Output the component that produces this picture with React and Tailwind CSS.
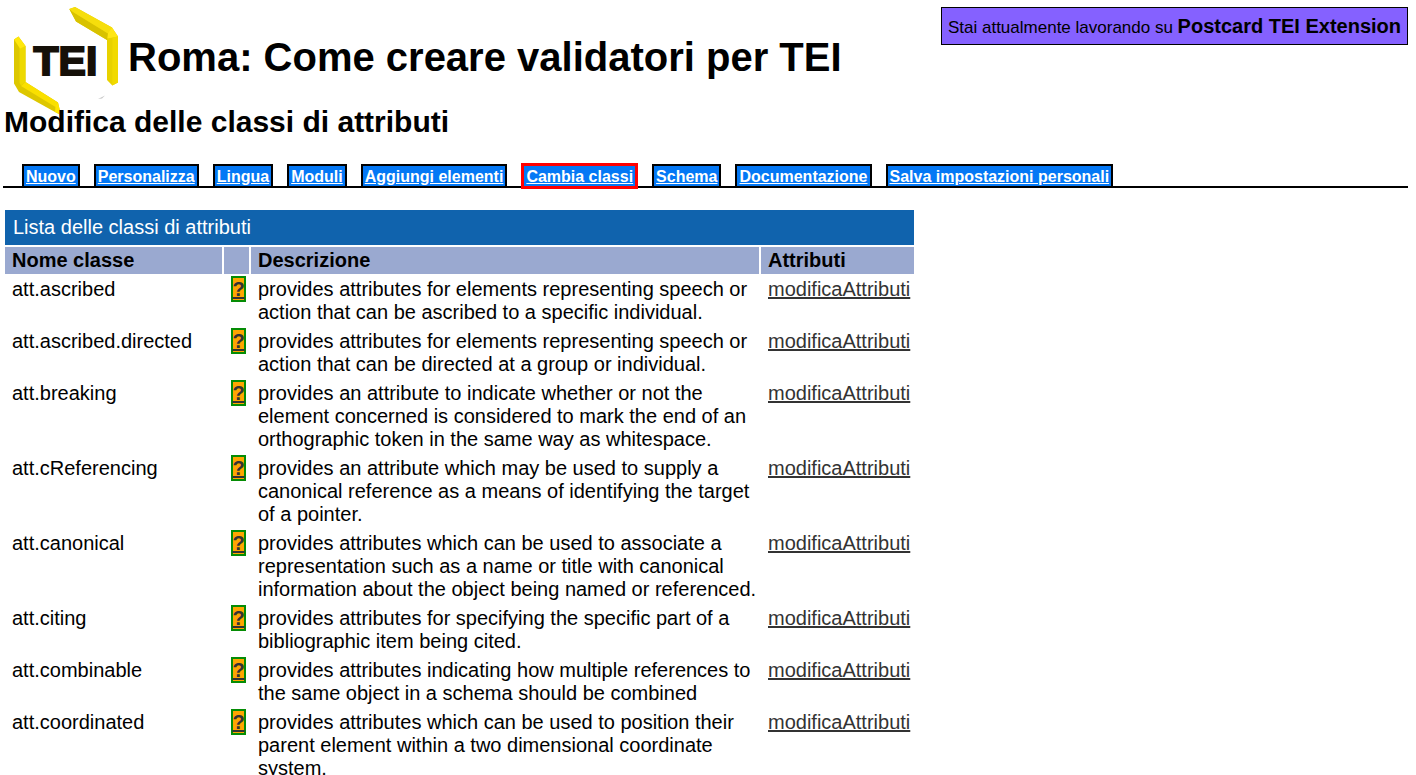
const tabs = [
  "Nuovo",
  "Personalizza",
  "Lingua",
  "Moduli",
  "Aggiungi elementi",
  "Cambia classi",
  "Schema",
  "Documentazione",
  "Salva impostazioni personali",
];

const classes = [
  ["att.ascribed", "provides attributes for elements representing speech or action that can be ascribed to a specific individual."],
  ["att.ascribed.directed", "provides attributes for elements representing speech or action that can be directed at a group or individual."],
  ["att.breaking", "provides an attribute to indicate whether or not the element concerned is considered to mark the end of an orthographic token in the same way as whitespace."],
  ["att.cReferencing", "provides an attribute which may be used to supply a canonical reference as a means of identifying the target of a pointer."],
  ["att.canonical", "provides attributes which can be used to associate a representation such as a name or title with canonical information about the object being named or referenced."],
  ["att.citing", "provides attributes for specifying the specific part of a bibliographic item being cited."],
  ["att.combinable", "provides attributes indicating how multiple references to the same object in a schema should be combined"],
  ["att.coordinated", "provides attributes which can be used to position their parent element within a two dimensional coordinate system."],
];

function Logo() {
  return (
    <svg viewBox="0 0 120 116" className="-mb-4 h-[116px] w-[120px] shrink-0" role="img" aria-label="TEI">
      <path d="M14 39.5 18.5 36.5 25.5 46V82L58 102.5 61 115 55 112 19 92 14 83.5Z" fill="#ddc700" />
      <path d="M19.5 46 25.5 46V82L21 85.5 19.5 83Z" fill="#edd900" />
      <path d="M14 39.5 18.5 36.5 25.5 46 20 48.5Z" fill="#ffe80c" />
      <path d="M25.5 82 58 102.5 55.5 107 21 86Z" fill="#fae000" />
      <path d="M58 102.5 61 115 55 112 55.5 106Z" fill="#ffe500" />
      <path d="M69.3 9 75 7 112 27.5 118 36.5V82.5L112.3 85.5 107 80V40L76 21.5Z" fill="#e8d200" />
      <path d="M69.3 9 73 12 109 34 107 40 76 21.5Z" fill="#d8c200" />
      <path d="M69.3 9 75 7 112 27.5 108 33.5 73 12Z" fill="#f6de0c" />
      <path d="M112 27.5 118 36.5 107.3 38.5 108 33Z" fill="#ffe614" />
      <path d="M112.5 37.5 118 36.5V82.5L112.3 85.5Z" fill="#f1da00" />
      <path d="M98 99 105 95.5 102 98.5Z" fill="#c8c8c8" />
      <text x="33.5" y="75" fontSize="41" fontWeight="700" fontFamily="Liberation Sans, Arial, sans-serif" fill="#151008" stroke="#151008" strokeWidth="2">
        TEI
      </text>
    </svg>
  );
}

export default function App() {
  return (
    <div className="bg-white px-[3px] font-['Liberation_Sans',Arial,sans-serif] text-[20px] leading-[23px] text-black">
      <header className="flex items-start">
        <div className="-ml-[3px] flex flex-1 items-start">
          <Logo />
          <h1 className="mt-[34px] pl-2 text-[40px] leading-[46px] font-bold">Roma: Come creare validatori per TEI</h1>
        </div>
        <p className="mt-[7px] mr-[5px] border border-black bg-[#8561ff] px-1.5 pt-[7px] pb-[5px] text-[17px] leading-[23px]">
          Stai attualmente lavorando su <strong className="text-[20px]">Postcard TEI Extension</strong>
        </p>
      </header>
      <h2 className="mt-1 pl-px text-[30px] leading-[35px] font-bold">Modifica delle classi di attributi</h2>

      <nav className="mt-[25px] mr-[5px] flex h-6 items-start gap-3.5 border-b-2 border-black pl-[19px] text-[16px] leading-[19px] font-bold text-white">
        {tabs.map((tab) => (
          <a
            key={tab}
            href="#"
            aria-current={tab === "Cambia classi" ? "page" : undefined}
            className={
              tab === "Cambia classi"
                ? "-mt-px border-3 border-[#ff0000] bg-[#0478f5] px-0.5 pt-px underline"
                : "border-2 border-black bg-[#0478f5] px-0.5 pt-px underline"
            }
          >
            {tab}
          </a>
        ))}
      </nav>

      <main className="mt-5">
        <table className="w-[913px] max-w-full table-fixed border-separate border-spacing-0.5 text-left">
          <colgroup>
            <col className="w-[217px]" />
            <col className="w-[25px]" />
            <col className="w-[508px]" />
            <col />
          </colgroup>
          <thead>
            <tr>
              <th colSpan={4} className="bg-[#1063ad] px-2 py-1.5 font-normal text-white">Lista delle classi di attributi</th>
            </tr>
            <tr className="bg-[#9aa9d0]">
              <th className="py-0.5 pr-0.5 pl-[7px]">Nome classe</th>
              <td />
              <th className="py-0.5 pr-0.5 pl-[7px]">Descrizione</th>
              <th className="py-0.5 pr-0.5 pl-[7px]">Attributi</th>
            </tr>
          </thead>
          <tbody>
            {classes.map(([name, description]) => (
              <tr key={name} className="align-top">
                <td className="py-0.5 pr-0.5 pl-[7px]">{name}</td>
                <td className="pl-[7px]">
                  <a href="#" aria-label={"Aiuto: " + name} className="flex w-[15px] justify-center border-2 border-[#058c05] bg-[#ffa500] pt-px leading-[21px] font-bold text-[#333333] underline">
                    ?
                  </a>
                </td>
                <td className="py-0.5 pr-0.5 pl-[7px]">{description}</td>
                <td className="py-0.5 pr-0.5 pl-[7px]">
                  <a href="#" className="text-[#333333] underline">modificaAttributi</a>
                </td>
              </tr>
            ))}
          </tbody>
        </table>
      </main>
    </div>
  );
}
